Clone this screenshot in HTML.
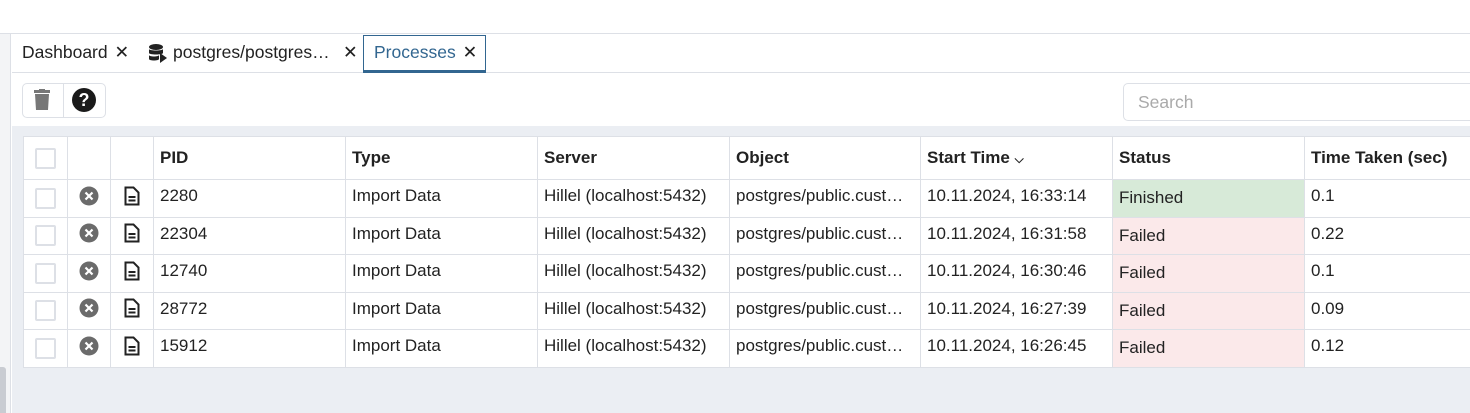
<!DOCTYPE html><html><head><style>
*{box-sizing:border-box;margin:0;padding:0}
body{width:1470px;height:413px;overflow:hidden;background:#fff;font-family:"Liberation Sans",sans-serif;position:relative;color:#222}
.abs{position:absolute}
table{border-collapse:collapse;table-layout:fixed;position:absolute;left:23px;top:136px;background:#fff;width:1451px}
td,th{border:1px solid #dde0e6;font-size:17px;text-align:left;padding:0 6px;white-space:nowrap;overflow:hidden}
th{height:43px;font-weight:bold;color:#222}
td{height:37.5px;vertical-align:top;padding-top:6px}
.cb{width:21px;height:21px;border:2px solid #dde0e6;border-radius:2px;margin:0 auto}
.fin{background:#d7ead8;padding-top:8px}
.fail{background:#fbe9ea;padding-top:8px}
.c{text-align:center;padding:0;vertical-align:middle}
</style></head><body>
<div class="abs" style="left:0;top:33px;width:1470px;height:1px;background:#dde0e6"></div>
<div class="abs" style="left:0;top:34px;width:11px;height:379px;background:#f3f4f6;border-right:1px solid #dde0e6"></div>
<div class="abs" style="left:0;top:367px;width:6px;height:46px;background:#c9ccd2;border-radius:0 3px 0 0"></div>
<div class="abs" style="left:12px;top:72px;width:1458px;height:1px;background:#dde0e6"></div>
<div class="abs" style="left:22px;top:42px;font-size:17.5px">Dashboard <span style="margin-left:2px">✕</span></div>
<svg class="abs" style="left:148px;top:43px" width="20" height="20" viewBox="0 0 20 20"><ellipse cx="8" cy="4" rx="7" ry="3" fill="#222"/><path d="M1 6c0 2 14 2 14 0v4c0 2-14 2-14 0zM1 12c0 2 10 2 10 0v4c0 2-10 2-10 0z" fill="#222"/><path d="M12 10l7 5-7 5z" fill="#222"/></svg>
<div class="abs" style="left:173px;top:42px;font-size:17.5px;width:190px;white-space:nowrap">postgres/postgres… <span style="position:absolute;left:170px">✕</span></div>
<div class="abs" style="left:363px;top:35px;width:123px;height:38px;border:1px solid #326690;border-bottom:3px solid #326690;color:#326690;font-size:17.5px;padding:6px 0 0 10px;white-space:nowrap">Processes <span style="color:#222;margin-left:2px">✕</span></div>
<div class="abs" style="left:22px;top:83px;width:84px;height:35px;border:1px solid #dde0e6;border-radius:5px"></div>
<div class="abs" style="left:63px;top:83px;width:1px;height:35px;background:#dde0e6"></div>
<svg class="abs" style="left:33px;top:89px" width="18" height="22" viewBox="0 0 18 22"><rect x="1" y="1" width="16" height="3" fill="#777"/><rect x="6" y="0" width="6" height="2" fill="#777"/><path d="M2 5h14l-1 16H3z" fill="#777"/></svg>
<div class="abs" style="left:72px;top:88px;width:24px;height:24px;border-radius:50%;background:#1a1a1a;color:#fff;font-weight:bold;font-size:18px;text-align:center;line-height:24px">?</div>
<div class="abs" style="left:1123px;top:83px;width:360px;height:38px;border:1px solid #dde0e6;border-radius:5px;font-size:17.5px;color:#aaa;padding:8px 14px">Search</div>
<div class="abs" style="left:12px;top:126px;width:1458px;height:287px;background:#ebeef3"></div>
<table>
<colgroup><col style="width:44px"><col style="width:43px"><col style="width:43px"><col style="width:192px"><col style="width:192px"><col style="width:192px"><col style="width:191px"><col style="width:192px"><col style="width:192px"><col style="width:170px"></colgroup>
<tr><th class="c"><div class="cb"></div></th><th></th><th></th><th>PID</th><th>Type</th><th>Server</th><th>Object</th><th>Start Time <span style="font-size:12px">⌵</span></th><th>Status</th><th>Time Taken (sec)</th></tr>
<tr><td class="c"><div class="cb"></div></td><td class="c"><svg width="20" height="20"><circle cx="10" cy="10" r="9.5" fill="#6b6b6b"/><path d="M6.5 6.5l7 7M13.5 6.5l-7 7" stroke="#fff" stroke-width="2.2"/></svg></td><td class="c"><svg width="16" height="20" viewBox="0 0 16 20"><path d="M1.5 1.5h8l5 5v12h-13z" fill="none" stroke="#222" stroke-width="2"/><path d="M4.5 11h7M4.5 14.5h7" stroke="#222" stroke-width="2"/></svg></td><td>2280</td><td>Import Data</td><td>Hillel (localhost:5432)</td><td>postgres/public.cust…</td><td>10.11.2024, 16:33:14</td><td class="fin">Finished</td><td>0.1</td></tr>
<tr><td class="c"><div class="cb"></div></td><td class="c"><svg width="20" height="20"><circle cx="10" cy="10" r="9.5" fill="#6b6b6b"/><path d="M6.5 6.5l7 7M13.5 6.5l-7 7" stroke="#fff" stroke-width="2.2"/></svg></td><td class="c"><svg width="16" height="20" viewBox="0 0 16 20"><path d="M1.5 1.5h8l5 5v12h-13z" fill="none" stroke="#222" stroke-width="2"/><path d="M4.5 11h7M4.5 14.5h7" stroke="#222" stroke-width="2"/></svg></td><td>22304</td><td>Import Data</td><td>Hillel (localhost:5432)</td><td>postgres/public.cust…</td><td>10.11.2024, 16:31:58</td><td class="fail">Failed</td><td>0.22</td></tr>
<tr><td class="c"><div class="cb"></div></td><td class="c"><svg width="20" height="20"><circle cx="10" cy="10" r="9.5" fill="#6b6b6b"/><path d="M6.5 6.5l7 7M13.5 6.5l-7 7" stroke="#fff" stroke-width="2.2"/></svg></td><td class="c"><svg width="16" height="20" viewBox="0 0 16 20"><path d="M1.5 1.5h8l5 5v12h-13z" fill="none" stroke="#222" stroke-width="2"/><path d="M4.5 11h7M4.5 14.5h7" stroke="#222" stroke-width="2"/></svg></td><td>12740</td><td>Import Data</td><td>Hillel (localhost:5432)</td><td>postgres/public.cust…</td><td>10.11.2024, 16:30:46</td><td class="fail">Failed</td><td>0.1</td></tr>
<tr><td class="c"><div class="cb"></div></td><td class="c"><svg width="20" height="20"><circle cx="10" cy="10" r="9.5" fill="#6b6b6b"/><path d="M6.5 6.5l7 7M13.5 6.5l-7 7" stroke="#fff" stroke-width="2.2"/></svg></td><td class="c"><svg width="16" height="20" viewBox="0 0 16 20"><path d="M1.5 1.5h8l5 5v12h-13z" fill="none" stroke="#222" stroke-width="2"/><path d="M4.5 11h7M4.5 14.5h7" stroke="#222" stroke-width="2"/></svg></td><td>28772</td><td>Import Data</td><td>Hillel (localhost:5432)</td><td>postgres/public.cust…</td><td>10.11.2024, 16:27:39</td><td class="fail">Failed</td><td>0.09</td></tr>
<tr><td class="c"><div class="cb"></div></td><td class="c"><svg width="20" height="20"><circle cx="10" cy="10" r="9.5" fill="#6b6b6b"/><path d="M6.5 6.5l7 7M13.5 6.5l-7 7" stroke="#fff" stroke-width="2.2"/></svg></td><td class="c"><svg width="16" height="20" viewBox="0 0 16 20"><path d="M1.5 1.5h8l5 5v12h-13z" fill="none" stroke="#222" stroke-width="2"/><path d="M4.5 11h7M4.5 14.5h7" stroke="#222" stroke-width="2"/></svg></td><td>15912</td><td>Import Data</td><td>Hillel (localhost:5432)</td><td>postgres/public.cust…</td><td>10.11.2024, 16:26:45</td><td class="fail">Failed</td><td>0.12</td></tr>
</table>
</body></html>
